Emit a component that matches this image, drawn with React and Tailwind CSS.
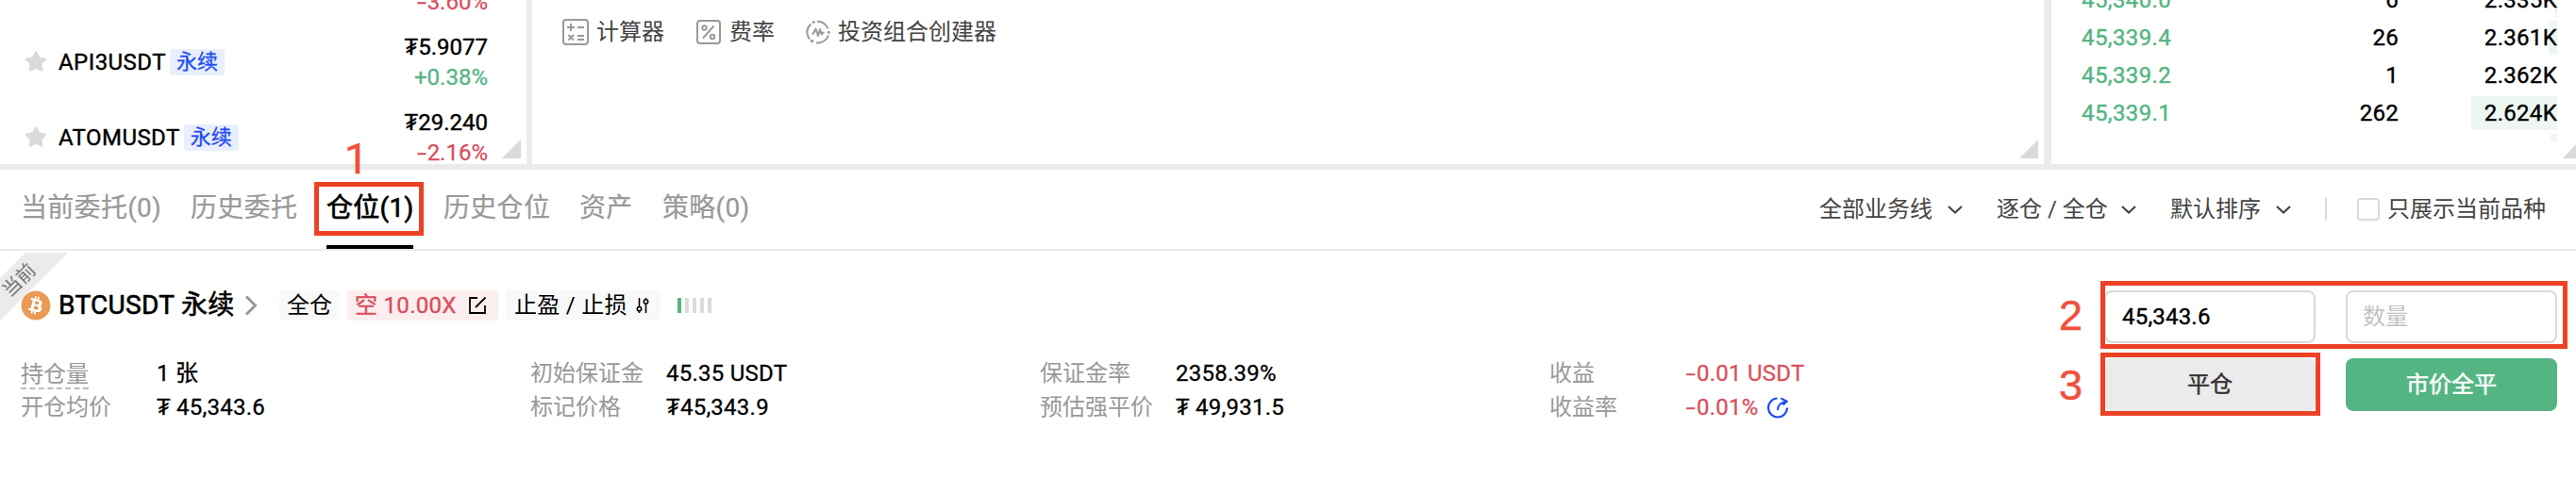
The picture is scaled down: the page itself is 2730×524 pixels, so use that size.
import { FaBitcoin, FaStar } from 'react-icons/fa'

const watchlist = [
  { name: 'APEUSDT', price: '₮1.4120', change: '-3.60%', up: false },
  { name: 'API3USDT', price: '₮5.9077', change: '+0.38%', up: true },
  { name: 'ATOMUSDT', price: '₮29.240', change: '-2.16%', up: false },
]

const bids = [
  { price: '45,340.0', size: '6', total: '2.335K', depth: 2 },
  { price: '45,339.4', size: '26', total: '2.361K', depth: 9 },
  { price: '45,339.2', size: '1', total: '2.362K', depth: 0 },
  { price: '45,339.1', size: '262', total: '2.624K', depth: 91 },
]

const tabs = [
  { label: '当前委托(0)', width: 'w-[148px]' },
  { label: '历史委托', width: 'w-[112px]' },
  { label: '仓位(1)', width: 'w-[92px]', active: true },
  { label: '历史仓位', width: 'w-[112px]' },
  { label: '资产', width: 'w-[56px]' },
  { label: '策略(0)', width: 'w-[92px]' },
]

const filters = [
  { label: '全部业务线', width: 'w-[152px]' },
  { label: '逐仓 / 全仓', width: 'w-[148px]' },
  { label: '默认排序', width: 'w-[128px]' },
]

const details = [
  [
    { label: '持仓量', value: '1 张', hint: true },
    { label: '开仓均价', value: '₮ 45,343.6' },
  ],
  [
    { label: '初始保证金', value: '45.35 USDT' },
    { label: '标记价格', value: '₮45,343.9' },
  ],
  [
    { label: '保证金率', value: '2358.39%' },
    { label: '预估强平价', value: '₮ 49,931.5' },
  ],
  [
    { label: '收益', value: '-0.01 USDT', loss: true },
    { label: '收益率', value: '-0.01%', loss: true, share: true },
  ],
]

// Roboto's hyphen is too short for a minus sign, so it gets stretched
function Signed({ value }) {
  if (value[0] !== '-') return value
  return (
    <>
      <span className="inline-block w-[12px] origin-center scale-x-150 text-center">-</span>
      {value.slice(1)}
    </>
  )
}

function Corner() {
  return (
    <svg className="absolute right-1.5 bottom-1.5" width="20" height="20" viewBox="0 0 20 20">
      <path d="M20 0V20H0Z" fill="#dadada" />
    </svg>
  )
}

function CalculatorIcon() {
  return (
    <svg width="28" height="28" viewBox="0 0 28 28" fill="none" stroke="#999" strokeWidth="2">
      <rect x="1" y="1" width="26" height="26" rx="3" />
      <path d="M5 9h8M9 5v8M16 9h7M16 18h7M16 22h7M6.500 17l5.500 5.500M12 17l-5.500 5.500" />
    </svg>
  )
}

function RateIcon() {
  return (
    <svg width="26" height="26" viewBox="0 0 26 26" fill="none" stroke="#999" strokeWidth="2">
      <rect x="1" y="1" width="24" height="24" rx="3" />
      <path d="M18.500 6.500L7 19.500" />
      <circle cx="8.500" cy="8.500" r="2.200" />
      <circle cx="17" cy="18" r="2.200" />
    </svg>
  )
}

function PortfolioIcon() {
  return (
    <svg width="26" height="26" viewBox="0 0 26 26" fill="none" stroke="#999" strokeWidth="2">
      <path d="M12 1.800a11.300 11.300 0 0 1 11.300 7.500M23.800 16.500A11.300 11.300 0 0 1 11 24.200M4 20.500A11.300 11.300 0 0 1 5.500 4.500" />
      <path d="M6.500 14.500h1.500l2.500-5 2.500 7.500 2-7 1.800 5.500 1.200-2h1.500" strokeLinejoin="round" />
      <g fill="#999" stroke="none">
        <circle cx="8.300" cy="2.500" r="1.500" />
        <circle cx="24.300" cy="13.200" r="1.500" />
        <circle cx="6.500" cy="22.500" r="1.700" />
      </g>
    </svg>
  )
}

function ChevronDown() {
  return (
    <svg width="16" height="9" viewBox="0 0 16 9" fill="none" stroke="#444" strokeWidth="2.200">
      <path d="M1 1l7 6.500L15 1" />
    </svg>
  )
}

function EditIcon() {
  return (
    <svg width="20" height="20" viewBox="0 0 20 20" fill="none" stroke="#000" strokeWidth="1.800">
      <path d="M10 2H2v16h16v-8M8 12l10.500-10.500" />
    </svg>
  )
}

function AdjustIcon() {
  return (
    <svg width="14" height="18" viewBox="0 0 14 18" fill="none" stroke="#000" strokeWidth="1.600">
      <path d="M3.500 1v9M10.500 8v9M3.500 15.500V17M10.500 1v1" />
      <circle cx="3.500" cy="12.700" r="2.200" />
      <circle cx="10.500" cy="5" r="2.200" />
    </svg>
  )
}

function ShareIcon() {
  return (
    <svg width="22" height="23" viewBox="0 0 22 23" fill="none" stroke="#1f4cf5" strokeWidth="2.200">
      <path d="M10.500 1.500A10 10 0 1 0 21 11.500" />
      <path d="M11 14c0-4.500 2.500-8 9-9M14.500 1.500L20.500 4.800l-4 3.500" />
    </svg>
  )
}

function Watchlist() {
  return (
    <div className="relative h-full w-[558px] shrink-0 overflow-hidden bg-white">
      <div className="-mt-[54px]">
        {watchlist.map(({ name, price, change, up }) => (
          <div key={name} className="flex h-20 items-center pr-[41px] pl-[26px]">
            <FaStar className="mr-3 -mt-[3px] size-6 text-[#dadada]" />
            <span className="tracking-[0.45px] [-webkit-text-stroke:0.4px]">{name}</span>
            <span className="ml-1 h-7 rounded bg-[#e9effc] px-[7px] text-[22px] leading-7 text-[#1f4cf5] [-webkit-text-stroke:0.3px]">永续</span>
            <div className="ml-auto text-right leading-8">
              <p className="[-webkit-text-stroke:0.4px]">{price}</p>
              <p className={up ? 'text-[#54b583] [-webkit-text-stroke:0.3px]' : 'text-[#d9505c] [-webkit-text-stroke:0.3px]'}>
                <Signed value={change} />
              </p>
            </div>
          </div>
        ))}
      </div>
      <Corner />
    </div>
  )
}

function Tools() {
  return (
    <div className="relative h-full flex-1 bg-white">
      <div className="flex h-[68px] items-center pl-8 text-[#444]">
        <CalculatorIcon />
        <span className="ml-2">计算器</span>
        <span className="ml-[34px]"><RateIcon /></span>
        <span className="ml-[9px]">费率</span>
        <span className="ml-[33px]"><PortfolioIcon /></span>
        <span className="ml-2">投资组合创建器</span>
      </div>
      <Corner />
    </div>
  )
}

function OrderBook() {
  return (
    <div className="relative ml-0.5 h-full w-[556px] shrink-0 overflow-hidden bg-white">
      <div className="-mt-[18px] flex flex-col gap-1 pr-5 pl-8 tracking-[0.3px] [-webkit-text-stroke:0.4px]">
        {bids.map(({ price, size, total, depth }) => (
          <div key={price} className="relative flex h-9 items-center">
            <div className="absolute top-0 right-0 h-9 bg-[#edf6f0]" style={{ width: depth }} />
            <span className="relative w-[150px] tracking-[0.4px] text-[#54b583]">{price}</span>
            <span className="relative w-[186px] text-right">{size}</span>
            <span className="relative ml-auto">{total}</span>
          </div>
        ))}
        <div className="h-2 w-[7px] self-end bg-[#edf6f0]" />
      </div>
      <svg className="absolute right-0 bottom-1.5" width="14" height="20" viewBox="0 0 14 20">
        <path d="M14 5V20H0Z" fill="#dadada" />
      </svg>
    </div>
  )
}

function TabBar() {
  return (
    <div className="flex h-[86px] items-stretch border-b-2 border-[#ebebeb] bg-white pr-8 pl-[22px]">
      <div className="flex gap-8 text-[28px]">
        {tabs.map(({ label, width, active }) => (
          <div
            key={label}
            className={`flex items-center whitespace-nowrap border-b-4 pt-[2px] tracking-[0.3px] ${width} ${
              active ? 'border-black text-black [-webkit-text-stroke:0.7px]' : 'border-transparent text-[#999] [-webkit-text-stroke:0.2px]'
            }`}
          >
            {label}
          </div>
        ))}
      </div>
      <div className="ml-auto flex items-center text-[#444]">
        <div className="flex gap-9">
          {filters.map(({ label, width }) => (
            <div key={label} className={`flex items-center justify-between whitespace-nowrap ${width}`}>
              {label}
              <ChevronDown />
            </div>
          ))}
        </div>
        <div className="ml-9 h-6 w-0.5 bg-[#dadada]" />
        <div className="mr-2 ml-8 size-6 rounded border-2 border-[#dadada] shadow-xs" />
        <span>只展示当前品种</span>
      </div>
    </div>
  )
}

function PositionHeader() {
  return (
    <div className="flex h-8 items-center">
      <FaBitcoin className="relative size-8 rounded-full bg-white text-[#e99b55]" />
      <span className="ml-2 w-[186px] text-[28px] tracking-[0.3px] whitespace-nowrap [-webkit-text-stroke:0.6px]">BTCUSDT 永续</span>
      <svg className="ml-[11px]" width="14" height="22" viewBox="0 0 14 22" fill="none" stroke="#999" strokeWidth="3">
        <path d="M2 1.500l9.500 9.500L2 20.500" />
      </svg>
      <div className="ml-[23px] flex gap-2">
        <span className="h-8 w-16 rounded-xs bg-[#f9f9f9] text-center leading-8">全仓</span>
        <span className="flex h-8 w-[160px] items-center justify-between rounded-xs bg-[#fceeef] pr-3 pl-2 text-[#d9505c]">
          <span className="tracking-[0.3px] [-webkit-text-stroke:0.4px]">空 10.00X</span>
          <EditIcon />
        </span>
        <span className="flex h-8 w-[164px] items-center justify-between rounded-xs bg-[#f9f9f9] pr-3 pl-[9px]">
          <span className="tracking-[0.3px]">止盈 / 止损</span>
          <AdjustIcon />
        </span>
      </div>
      <div className="ml-[18px] flex gap-1">
        <i className="h-4 w-1 bg-[#54b583]" />
        <i className="h-4 w-1 bg-[#dadada]" />
        <i className="h-4 w-1 bg-[#dadada]" />
        <i className="h-4 w-1 bg-[#dadada]" />
        <i className="h-4 w-1 bg-[#dadada]" />
      </div>
    </div>
  )
}

function Position() {
  return (
    <div className="relative flex flex-1 justify-between overflow-hidden bg-white pt-[42px] pr-5 pl-[22px]">
      {/* corner ribbon */}
      <svg className="absolute top-0.5 left-0" width="72" height="72" viewBox="0 0 72 72">
        <path d="M27 0H72L0 72V27Z" fill="#ebebeb" />
      </svg>
      <span className="absolute top-[19px] left-0 w-10 -rotate-45 text-center text-[20px] leading-6 text-[#777]">当前</span>

      <div>
        <PositionHeader />
        <div className="mt-[38px] flex">
          {details.map((col) => (
            <div key={col[0].label} className="w-[540px]">
              {col.map(({ label, value, hint, loss, share }) => (
                <div key={label} className="flex h-9 items-center">
                  <div className="w-36 text-[#999]">
                    <span className={hint ? 'inline-block h-[34px] border-b-2 border-dashed border-[#bbb] leading-9' : ''}>{label}</span>
                  </div>
                  <span className={`tracking-[0.25px] [-webkit-text-stroke:0.3px] ${loss ? 'text-[#d9505c]' : 'text-black'}`}>
                    <Signed value={value} />
                  </span>
                  {share && <span className="ml-[9px]"><ShareIcon /></span>}
                </div>
              ))}
            </div>
          ))}
        </div>
      </div>

      <div className="grid h-32 grid-cols-[224px_224px] grid-rows-[56px_56px] gap-x-8 gap-y-4">
        <div className="flex items-center rounded-lg border-2 border-[#dadada] pl-[17px] tracking-[0.2px] [-webkit-text-stroke:0.4px]">45,343.6</div>
        <div className="flex items-center rounded-lg border-2 border-[#dadada] pl-[16px] text-[#c2c2c2]">数量</div>
        <button className="rounded-lg bg-[#ebebeb] text-[#333] [-webkit-text-stroke:0.5px]">平仓</button>
        <button className="rounded-lg bg-[#54b583] text-white [-webkit-text-stroke:0.5px]">市价全平</button>
      </div>
    </div>
  )
}

// Numbered step markers drawn over the page
function Steps() {
  return (
    <div className="pointer-events-none font-['Liberation_Sans',sans-serif] text-[45px] leading-[45px] text-[#f04f3c] [-webkit-text-stroke:0.5px]">
      <div className="absolute top-[193px] left-[333px] h-[57px] w-[116px] border-[5px] border-[#ed4125]" />
      <span className="absolute top-[146px] left-[365px] font-[Roboto]">1</span>
      <div className="absolute top-[298px] left-[2226px] h-[72px] w-[495px] border-[5px] border-[#ed4125]" />
      <span className="absolute top-[312px] left-[2182px]">2</span>
      <div className="absolute top-[374px] left-[2226px] h-[67px] w-[233px] border-[5px] border-[#ed4125]" />
      <span className="absolute top-[386px] left-[2182px]">3</span>
    </div>
  )
}

export default function App() {
  return (
    <div className="relative flex h-[524px] w-[2730px] flex-col overflow-hidden bg-white font-[Roboto,'Noto_Sans_CJK_SC',sans-serif] text-[24px] leading-8 font-normal text-black">
      <div className="flex h-[180px] gap-1.5 bg-[#ebebeb] pb-1.5">
        <Watchlist />
        <Tools />
        <OrderBook />
      </div>
      <TabBar />
      <Position />
      <Steps />
    </div>
  )
}
